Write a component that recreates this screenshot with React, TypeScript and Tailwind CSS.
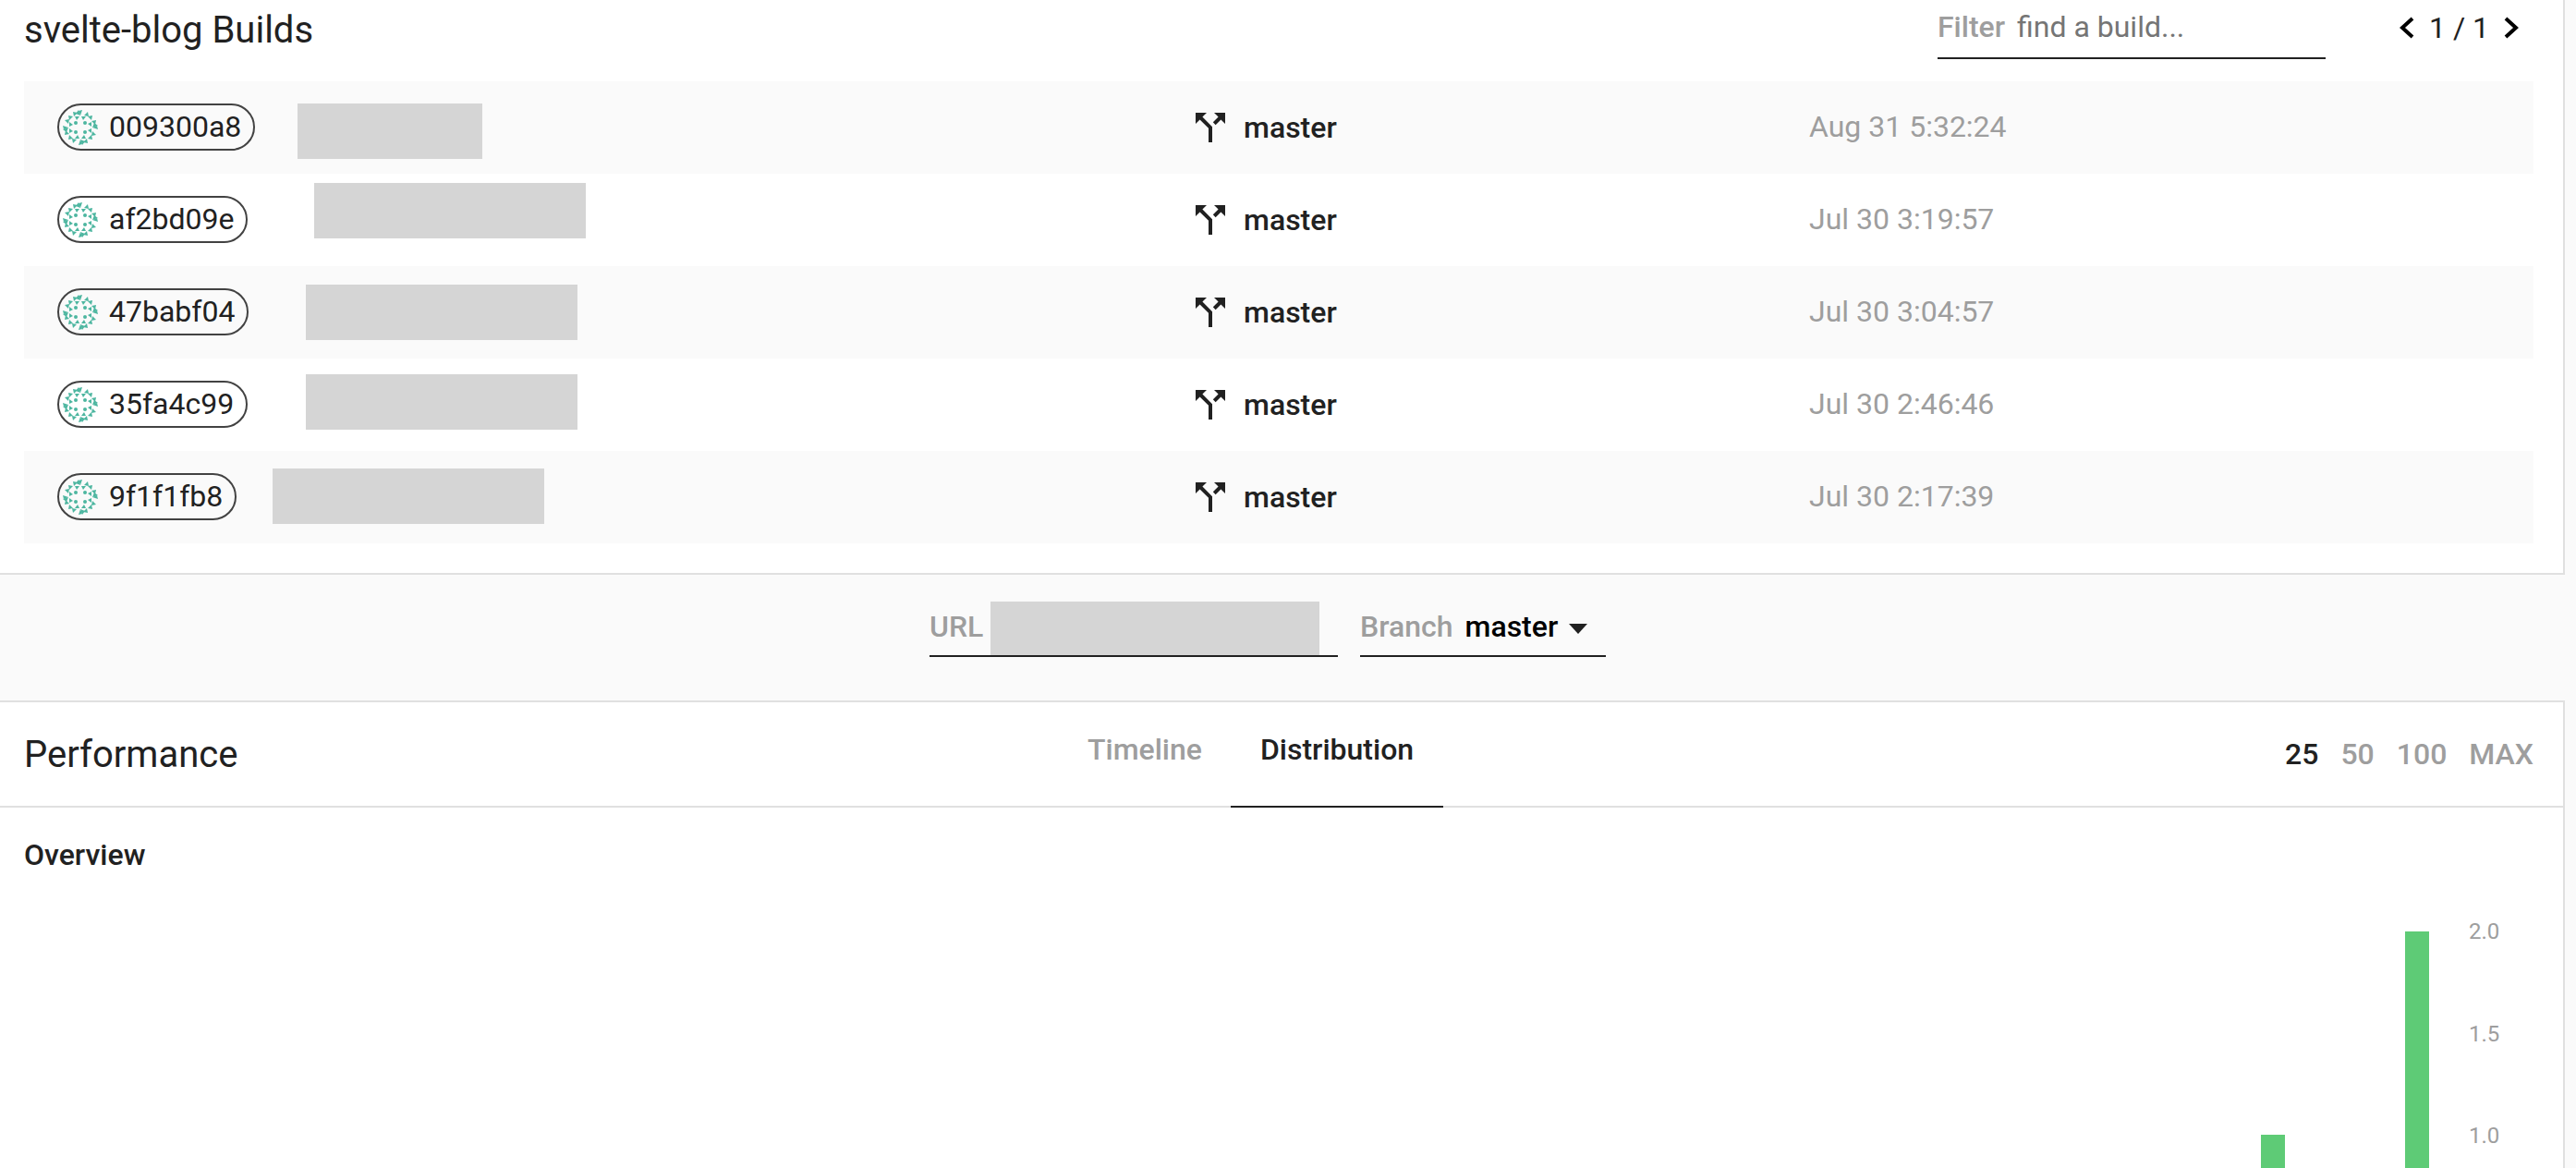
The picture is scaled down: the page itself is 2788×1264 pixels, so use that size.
import React from 'react';

const builds = [
  { sha: '009300a8', date: 'Aug 31 5:32:24', redact: 'ml-[46px] mt-[24px] w-[200px]' },
  { sha: 'af2bd09e', date: 'Jul 30 3:19:57', redact: 'ml-[72px] mt-[10px] w-[294px]' },
  { sha: '47babf04', date: 'Jul 30 3:04:57', redact: 'ml-[62px] mt-[20px] w-[294px]' },
  { sha: '35fa4c99', date: 'Jul 30 2:46:46', redact: 'ml-[63px] mt-[17px] w-[294px]' },
  { sha: '9f1f1fb8', date: 'Jul 30 2:17:39', redact: 'ml-[39px] mt-[19px] w-[294px]' },
];

// one quadrant of the identicon, rotated round the centre 4 times
const wedge = [
  'M12 3l5 1-4 4z',
  'M18 1l2 6-5-2z',
  'M7 7l5 1-4 4z',
  'M3 12l5-1-1 5z',
  'M1 18l6 2-5 2z',
  'M14 8h5l-3 4z',
  'M8 14l4 3-4 2z',
];

const Identicon = () => (
  <svg viewBox="0 0 40 40" className="w-10 h-10 shrink-0" fill="#4db6a0">
    {[0, 90, 180, 270].map((angle) => (
      <g key={angle} transform={`rotate(${angle} 20 20)`}>
        {wedge.map((d) => <path key={d} d={d} />)}
        <circle cx="15" cy="15" r="2" />
      </g>
    ))}
  </svg>
);

const BranchIcon = () => (
  <svg viewBox="0 0 24 24" className="w-12 h-12 shrink-0" fill="#212121">
    <path d="M14 4l2.29 2.29-2.88 2.88 1.42 1.42 2.88-2.88L20 10V4zm-4 0H4v6l2.29-2.29 4.71 4.7V20h2v-8.41l-5.29-5.3z" />
  </svg>
);

const Chevron = ({ dir }: { dir: 'left' | 'right' }) => (
  <svg viewBox="0 0 16 24" className="w-4 h-6" fill="none" stroke="#000" strokeWidth="4">
    <path d={dir === 'left' ? 'M14 2L3 12l11 10' : 'M2 2l11 10L2 22'} />
  </svg>
);

export default function App() {
  return (
    <div className="h-[1264px] overflow-hidden bg-[#fafafa] text-[#212121] font-['Roboto',sans-serif]">
      {/* Builds */}
      <div className="w-[2776px] h-[622px] bg-white border-r-2 border-b-2 border-[#e0e0e0] pl-[26px] pr-[32px]">
        <div className="h-[88px] flex items-start">
          <h1 className="text-[40px] leading-[65px] font-normal">svelte-blog Builds</h1>
          <div className="ml-auto flex items-start">
            <div className="w-[420px] h-[64px] border-b-2 border-[#212121] flex items-center text-[32px] pb-[5px]">
              <span className="text-[#9e9e9e] font-medium">Filter</span>
              <span className="ml-[13px] text-[#757575]">find a build...</span>
            </div>
            <div className="ml-[80px] mr-[16px] flex items-center h-[62px] gap-[16px] text-[32px] pb-[2px]">
              <Chevron dir="left" />
              <span>1 / 1</span>
              <Chevron dir="right" />
            </div>
          </div>
        </div>
        <div>
          {builds.map((build, index) => (
            <div key={build.sha} className={`h-[100px] flex pl-[36px] ${index % 2 === 0 ? 'bg-[#fafafa]' : 'bg-white'}`}>
              <div className="w-[1223px] flex items-start">
                <div className="mt-[24px] h-[51px] flex items-center border-2 border-[#424242] rounded-full pl-[3px] pr-[13px] gap-[11px] text-[32px]">
                  <Identicon />
                  <span className="pb-[2px]">{build.sha}</span>
                </div>
                <div className={`h-[60px] bg-[#d5d5d5] ${build.redact}`} />
              </div>
              <div className="w-[673px] flex items-center pl-[1px]">
                <BranchIcon />
                <span className="ml-[12px] text-[32px] font-medium">master</span>
              </div>
              <div className="flex items-center text-[32px] text-[#9e9e9e] pb-[3px]">{build.date}</div>
            </div>
          ))}
        </div>
      </div>

      {/* Selectors */}
      <div className="h-[136px] flex justify-center pr-[44px]">
        <div className="mt-[29px] h-[60px] w-[442px] border-b-2 border-[#212121] flex text-[32px]">
          <span className="text-[#9e9e9e] font-medium mt-[3px]">URL</span>
          <div className="ml-[8px] w-[356px] h-[58px] bg-[#d5d5d5]" />
        </div>
        <div className="ml-[24px] mt-[29px] h-[60px] w-[266px] border-b-2 border-[#212121] flex items-start text-[32px]">
          <span className="text-[#9e9e9e] font-medium mt-[3px]">Branch</span>
          <span className="ml-[13px] mt-[3px] font-medium text-black">master</span>
          <span className="ml-[12px] mt-[24px] w-0 h-0 border-x-[10px] border-x-transparent border-t-[11px] border-t-[#212121]" />
        </div>
      </div>

      {/* Performance */}
      <div className="w-[2776px] h-[506px] bg-white border-t-2 border-r-2 border-[#e0e0e0]">
        <div className="h-[114px] relative flex items-center justify-between pl-[26px] pr-[32px] border-b-2 border-[#e0e0e0]">
          <h2 className="text-[40px] font-normal pt-[2px]">Performance</h2>
          <div className="absolute left-[1145px] top-0 h-[112px] flex text-[32px] font-medium">
            <div className="w-[187px] flex items-center pl-[32px] pb-[10px] text-[#9e9e9e]">Timeline</div>
            <div className="w-[230px] h-[114px] flex items-center justify-center pb-[10px] border-b-2 border-[#212121]">Distribution</div>
          </div>
          <div className="flex gap-[24px] text-[32px] font-medium text-[#9e9e9e]">
            <span className="text-[#212121]">25</span>
            <span>50</span>
            <span>100</span>
            <span>MAX</span>
          </div>
        </div>
        <h3 className="pl-[26px] mt-[31px] text-[32px] leading-[40px] font-medium">Overview</h3>
        <svg width="2774" height="340" className="block" fill="#9e9e9e" fontSize="24">
          <rect x="2447" y="283" width="26" height="57" fill="#5ecb76" />
          <rect x="2603" y="63" width="26" height="277" fill="#5ecb76" />
          <text x="2672" y="71">2.0</text>
          <text x="2672" y="182">1.5</text>
          <text x="2672" y="292">1.0</text>
        </svg>
      </div>
    </div>
  );
}
